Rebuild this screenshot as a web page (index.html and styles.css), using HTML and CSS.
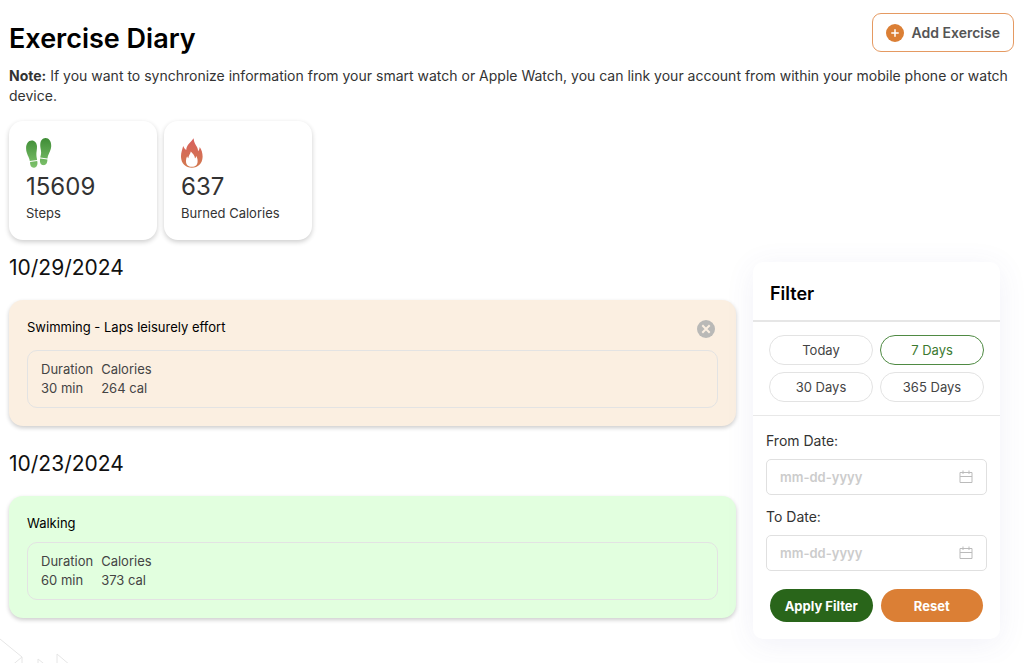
FILE: index.html
```html
<!DOCTYPE html>
<html lang="en">
<head>
    <meta charset="UTF-8">
    <meta name="viewport" content="width=device-width, initial-scale=1.0">
    <title>Exercise Diary</title>
    <link rel="stylesheet" href="styles.css">
</head>
<body>
    <svg class="page-pattern" viewBox="0 0 80 30" aria-hidden="true">
        <path d="M0 6 L22 24 L10 34 M22 24 V34 M38 34 V26 L48 34 M57 34 V21 L70 32" fill="none" stroke="#e6e6e6"/>
    </svg>

    <div class="diary">
        <header class="diary-header">
            <h1>Exercise Diary</h1>
            <button type="button" class="add-btn">
                <svg viewBox="0 0 18 18" aria-hidden="true">
                    <circle cx="9" cy="9" r="9" fill="#db7f35"/>
                    <path d="M9 5.8 V12.2 M5.8 9 H12.2" stroke="#fff" stroke-width="1.5" stroke-linecap="round"/>
                </svg>
                Add Exercise
            </button>
        </header>

        <p class="note"><strong>Note:</strong> If you want to synchronize information from your smart watch or Apple Watch, you can link your account from within your mobile phone or watch device.</p>

        <div class="stats">
            <div class="stat-card">
                <svg class="stat-icon" viewBox="0 0 26 30" aria-hidden="true">
                    <defs>
                        <linearGradient id="stepsFill" gradientUnits="userSpaceOnUse" x1="0" y1="0" x2="0" y2="30">
                            <stop offset="0" stop-color="#3f8c36"/>
                            <stop offset="1" stop-color="#80c46e"/>
                        </linearGradient>
                    </defs>
                    <g fill="url(#stepsFill)">
                        <path d="M5.8 2.6 C8.8 2.6 10.9 5.2 11 8.6 C11.1 12 10.2 14.2 10.4 17 C10.5 19 10.9 20.4 11.1 22 L3.8 23 C3.4 19.6 .2 15.8 .1 10.6 C0 6 2.4 2.6 5.8 2.6 Z"/>
                        <path d="M4.1 24 L11.2 23 C12 26.6 10.8 29.5 8.1 29.7 C5.3 29.9 3.9 27.6 4.1 24 Z"/>
                        <path d="M19.4 .1 C22.9 -.1 25.4 3.4 25.2 8.2 C25 12.9 22 16 21.5 20.4 L14.3 19.4 C14.5 17.6 15.2 16.4 15.1 14 C15 11.4 14 9.4 14.3 6 C14.6 2.6 16.6 .2 19.4 .1 Z"/>
                        <path d="M14.2 20.4 L21.4 21.4 C21.5 25 19.8 27.4 17.2 27.1 C14.5 26.8 13.4 24 14.2 20.4 Z"/>
                    </g>
                </svg>
                <div class="stat-value">15609</div>
                <div class="stat-label">Steps</div>
            </div>
            <div class="stat-card">
                <svg class="stat-icon" viewBox="0 0 26 30" aria-hidden="true">
                    <defs>
                        <linearGradient id="flameFill" x1="0" y1="0" x2="0" y2="1">
                            <stop offset="0" stop-color="#d8605e"/>
                            <stop offset="1" stop-color="#d27a4f"/>
                        </linearGradient>
                    </defs>
                    <path fill="url(#flameFill)" fill-rule="evenodd" d="M12.6 .3 C12.8 4.2 14.6 6.6 16 9 C16.7 10.4 17 11.8 17.1 13.2 C18.2 12 18.6 10.4 18.7 9 C20.8 12 21.7 15.4 21.6 19 C21.4 25.4 17 29.8 10.9 29.8 C4.6 29.8 .2 25.4 0 19 C-.1 14.8 1.2 11.6 2.2 8 C3 10 4 11.2 5.2 12 C5.6 6.6 9.6 4.6 12.6 .3 Z M9.8 13.6 C9.6 16 7.6 17.2 7.3 20.2 C6.6 19.7 6.2 19 6.1 18.2 C5.3 20 4.9 21.6 5 23.4 C5.1 26.8 7.4 28.8 10.9 28.8 C14.4 28.8 16.5 26.8 16.6 23.4 C16.7 21.4 16.2 19.8 15.4 18 C15.2 19 14.8 19.8 14 20.4 C13.8 17.4 11.6 15.6 9.8 13.6 Z"/>
                </svg>
                <div class="stat-value">637</div>
                <div class="stat-label">Burned Calories</div>
            </div>
        </div>

        <div class="diary-body">
            <main class="entries">
                <section>
                    <h2>10/29/2024</h2>
                    <article class="entry entry-orange">
                        <div class="entry-head">
                            <h3>Swimming - Laps leisurely effort</h3>
                            <button type="button" class="remove-btn" aria-label="Remove exercise">
                                <svg viewBox="0 0 18 18" aria-hidden="true">
                                    <circle cx="9" cy="9" r="9" fill="#b9b9b7"/>
                                    <path d="M5.3 5.3 L12.7 12.7 M12.7 5.3 L5.3 12.7" stroke="#fbefe1" stroke-width="2"/>
                                </svg>
                            </button>
                        </div>
                        <div class="entry-details">
                            <table>
                                <tr><th>Duration</th><th>Calories</th></tr>
                                <tr><td>30 min</td><td>264 cal</td></tr>
                            </table>
                        </div>
                    </article>
                </section>

                <section>
                    <h2>10/23/2024</h2>
                    <article class="entry entry-green">
                        <div class="entry-head">
                            <h3>Walking</h3>
                        </div>
                        <div class="entry-details">
                            <table>
                                <tr><th>Duration</th><th>Calories</th></tr>
                                <tr><td>60 min</td><td>373 cal</td></tr>
                            </table>
                        </div>
                    </article>
                </section>
            </main>

            <aside class="filter">
                <h2>Filter</h2>
                <div class="filter-ranges">
                    <button type="button">Today</button>
                    <button type="button" class="active">7 Days</button>
                    <button type="button">30 Days</button>
                    <button type="button">365 Days</button>
                </div>
                <form class="filter-form">
                    <label for="fromDate">From Date:</label>
                    <div class="date-field">
                        <input type="text" id="fromDate" placeholder="mm-dd-yyyy">
                        <svg viewBox="0 0 14 14" aria-hidden="true">
                            <path d="M1 2.5 H13 V12.5 H1 Z M1 6.5 H13 M4 .5 V4 M10 .5 V4" fill="none" stroke="#bbb"/>
                        </svg>
                    </div>
                    <label for="toDate">To Date:</label>
                    <div class="date-field">
                        <input type="text" id="toDate" placeholder="mm-dd-yyyy">
                        <svg viewBox="0 0 14 14" aria-hidden="true">
                            <path d="M1 2.5 H13 V12.5 H1 Z M1 6.5 H13 M4 .5 V4 M10 .5 V4" fill="none" stroke="#bbb"/>
                        </svg>
                    </div>
                    <div class="filter-actions">
                        <button type="submit" class="apply-btn">Apply Filter</button>
                        <button type="reset" class="reset-btn">Reset</button>
                    </div>
                </form>
            </aside>
        </div>
    </div>
</body>
</html>
```
FILE: styles.css
```css
* { margin: 0; padding: 0; box-sizing: border-box; }
body { font-family: Inter, sans-serif; font-size: 13px; line-height: 20px; background: white; color: #333; min-height: 100vh; position: relative; }
button, input { font-family: inherit; font-size: inherit; }
button { cursor: pointer; }
.page-pattern { position: absolute; left: 0; bottom: 0; width: 80px; height: 30px; }
.diary { position: relative; padding: 13px 10px 22px 9px; }

.diary-header { display: flex; justify-content: space-between; align-items: flex-start; margin-bottom: 14px; }
.diary-header h1 { font-size: 27px; line-height: 27px; padding-top: 12px; font-weight: 600; color: #000; }
.add-btn { display: flex; align-items: center; gap: 8px; height: 39px; padding: 0 13px; background: white; border: 1px solid #e59a62; border-radius: 9px; font-size: 14px; font-weight: 600; color: #555; }
.add-btn svg { width: 18px; height: 18px; }
.note { font-size: 14px; margin-bottom: 15px; }
.note strong { font-weight: 700; }

.stats { display: flex; gap: 7px; margin-bottom: 14px; }
.stat-card { width: 148px; height: 119px; padding: 17px; background: white; border-radius: 14px; box-shadow: 0 2px 5px rgba(0,0,0,0.2); }
.stat-icon { display: block; width: 26px; height: 30px; }
.stat-value { font-size: 24px; line-height: 28px; margin: 5px 0 2px; }
.stat-label { font-size: 13px; }

.diary-body { display: grid; grid-template-columns: 1fr 247px; gap: 17px; align-items: start; padding-right: 14px; }
.entries section { margin-bottom: 24px; }
.entries section:last-child { margin-bottom: 0; }
.entries h2 { font-size: 21px; line-height: 28px; margin-bottom: 18px; font-weight: 400; color: #111; }
.entry { padding: 17px 18px 18px; border-radius: 14px; box-shadow: 0 2px 4px rgba(0,0,0,0.2); }
.entry-orange { background: #fbefe1; }
.entry-green { background: #e2ffdf; }
.entry-head { display: flex; justify-content: space-between; margin-bottom: 9px; }
.entry h3 { font-size: 13px; line-height: 20px; font-weight: 400; color: #000; }
.remove-btn { width: 24px; height: 24px; padding: 3px; background: none; border: none; }
.remove-btn svg { display: block; width: 18px; height: 18px; }
.entry-details { padding: 9px 13px; border: 1px solid #e3e3e3; border-radius: 10px; }
.entry table { border-collapse: collapse; }
.entry th, .entry td { padding-right: 8px; line-height: 19px; font-weight: 400; text-align: left; color: #444; }

.filter { margin-top: 8px; background: white; border-radius: 10px; box-shadow: 0 5px 30px rgba(80,80,160,0.08); }
.filter h2 { padding: 18px 17px 13px; font-size: 18px; line-height: 27px; font-weight: 600; color: #000; border-bottom: 2px solid #e6e6e6; }
.filter-ranges { display: grid; grid-template-columns: 1fr 1fr; gap: 7px; padding: 13px 16px; border-bottom: 1px solid #e8e8e8; }
.filter-ranges button { height: 30px; background: white; border: 1px solid #e3e3e3; border-radius: 15px; color: #444; }
.filter-ranges .active { border-color: #4f8a43; color: #3c7a30; }
.filter-form { padding: 15px 13px 17px; }
.filter-form label { display: block; font-size: 14px; line-height: 20px; margin-bottom: 8px; }
.date-field { position: relative; margin-bottom: 12px; }
.date-field input { display: block; width: 100%; height: 36px; padding: 0 36px 0 13px; border: 1px solid #e0e0e0; border-radius: 5px; font-weight: 600; color: #444; background: white; }
.date-field input::placeholder { color: #ccc; opacity: 1; }
.date-field svg { position: absolute; right: 14px; top: 11px; width: 14px; height: 14px; pointer-events: none; }
.filter-actions { display: grid; grid-template-columns: 1fr 1fr; gap: 8px; padding: 6px 4px 0; }
.filter-actions button { height: 33px; border: none; border-radius: 17px; font-weight: 700; color: white; }
.apply-btn { background: #29651a; }
.reset-btn { background: #db7f35; }

@media (max-width: 768px) { .diary-body { grid-template-columns: 1fr; padding-right: 0; } .diary-header { gap: 10px; } }
```
